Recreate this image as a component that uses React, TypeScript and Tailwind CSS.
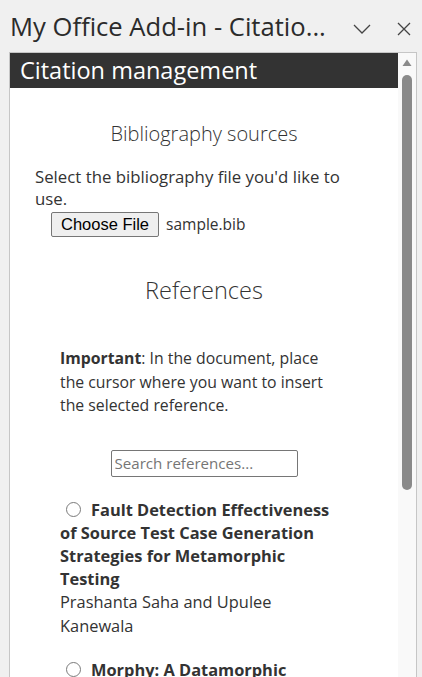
const font = { fontFamily: '"Open Sans", "Noto Sans", sans-serif' }

const references = [
  {
    title: ['Fault Detection Effectiveness', 'of Source Test Case Generation', 'Strategies for Metamorphic', 'Testing'],
    authors: ['Prashanta Saha and Upulee', 'Kanewala'],
  },
  {
    title: ['Morphy: A Datamorphic', 'Software Test Automation Tool'],
    authors: ['Hong Zhu and Ian Bayley'],
  },
]

function Lines({ lines }: { lines: string[] }) {
  return (
    <>
      {lines.map((l, i) => (
        <span key={i}>
          {i > 0 && <br />}
          {l}
        </span>
      ))}
    </>
  )
}

function Scrollbar() {
  return (
    <div className="w-[18px] shrink-0 bg-[#f9f9f9] flex flex-col items-center">
      <svg width="10" height="8" viewBox="0 0 10 8" className="mt-[6px]">
        <polygon points="5,0.5 9.5,7 0.5,7" fill="#8a8a8a" />
      </svg>
      <div className="mt-[8px] w-[10px] h-[415px] rounded-full bg-[#8a8a8a]" />
    </div>
  )
}

function ReferenceItem({ title, authors }: { title: string[]; authors: string[] }) {
  return (
    <div className="pl-[50px] text-[16.4px] leading-[23.2px] text-[#333]">
      <div className="font-bold">
        <span className="inline-block align-[-1px] w-[15px] h-[15px] rounded-full border border-[#7a7a7a] bg-white ml-[6px] mr-[10px]" />
        <Lines lines={title} />
      </div>
      <div>
        <Lines lines={authors} />
      </div>
    </div>
  )
}

export default function App() {
  return (
    <div className="w-[422px] h-[677px] bg-[#f0f0f0] overflow-hidden flex flex-col" style={font}>
      <div className="h-[52px] shrink-0 flex items-center pl-[10px] pr-[11px] text-[#2b2b2b]">
        <div className="flex-1 text-[25.6px] leading-none mt-[2px] whitespace-nowrap">My Office Add-in - Citatio...</div>
        <svg width="18" height="10" viewBox="0 0 18 10" className="mr-[26px] mt-[6px]">
          <polyline points="1,1 9,9 17,1" fill="none" stroke="#444" strokeWidth="1.3" />
        </svg>
        <svg width="14" height="14" viewBox="0 0 14 14" className="mt-[6px]">
          <path d="M1 1 L13 13 M13 1 L1 13" stroke="#444" strokeWidth="1.3" />
        </svg>
      </div>

      <div className="flex-1 min-h-0 ml-[9px] mr-[5px] border border-b-0 border-[#c6c6c6] bg-white flex">
        <div className="flex-1 min-w-0 overflow-hidden">
          <div className="h-[35px] bg-[#333] text-white text-[23.5px] leading-[35px] pl-[10px]">
            Citation management
          </div>

          <div className="mt-[32px] text-center text-[20px] leading-[28px] font-light text-[#333]">
            Bibliography sources
          </div>
          <p className="mt-[18px] pl-[25px] text-[16.8px] leading-[22px] text-[#333]">
            Select the bibliography file you'd like to
            <br />
            use.
          </p>
          <div className="mt-[2px] flex items-center pl-[41px]">
            <button
              className="h-[25px] px-[9px] bg-[#efefef] border border-[#767676] rounded-[2px] text-[16.5px] leading-none text-black"
              style={{ fontFamily: '"Liberation Sans", Arial, sans-serif' }}
            >
              Choose File
            </button>
            <span className="ml-[7px] text-[15.5px] text-[#333]">sample.bib</span>
          </div>

          <div className="mt-[37px] text-center text-[23.5px] leading-[32px] font-light text-[#333]">
            References
          </div>
          <p className="mt-[41px] pl-[50px] text-[15.8px] leading-[23.5px] text-[#333]">
            <b className="font-bold">Important</b>: In the document, place
            <br />
            the cursor where you want to insert
            <br />
            the selected reference.
          </p>
          <div className="mt-[32px] flex justify-center">
            <input
              placeholder="Search references..."
              className="w-[187px] h-[27px] border border-[#767676] rounded-[2px] px-[3px] text-[15.1px] text-[#333] placeholder:text-[#757575] outline-none"
            />
          </div>

          <div className="mt-[21px] flex flex-col gap-[21px]">
            {references.map((r, i) => (
              <ReferenceItem key={i} title={r.title} authors={r.authors} />
            ))}
          </div>
        </div>
        <Scrollbar />
      </div>
    </div>
  )
}
